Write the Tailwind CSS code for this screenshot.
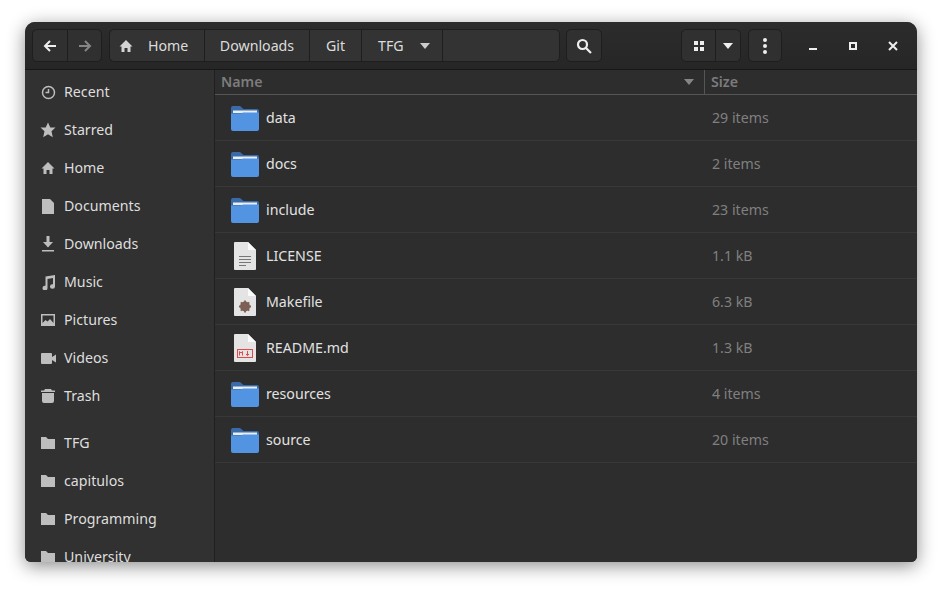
<!DOCTYPE html>
<html lang="en">

<head>
    <meta charset="UTF-8" />
    <title>TFG - Files</title>
    <script src="https://cdn.jsdelivr.net/npm/@tailwindcss/browser@4"></script>
</head>

<body class="bg-white h-[590px] w-[942px] overflow-hidden font-['Noto_Sans',sans-serif] text-[14.2px]">
    <svg class="hidden">
        <symbol id="folder-blue" viewBox="0 0 28 26">
            <path d="M0 3a2 2 0 0 1 2-2h7l3.500 3H26a2 2 0 0 1 2 2v4H0z" fill="#3a6ba8" />
            <rect x="2" y="5.500" width="24" height="2.500" fill="#e8eef6" />
            <path d="M0 8.500h10l2-1h16V24a2 2 0 0 1-2 2H2a2 2 0 0 1-2-2z" fill="#5294e2" />
        </symbol>
        <symbol id="folder" viewBox="0 0 14 14">
            <path d="M0 1h5l2 2h7v10H0z" fill="#bebebe" />
        </symbol>
        <symbol id="page" viewBox="0 0 22 28">
            <path d="M1 0h13l8 8v19a1 1 0 0 1-1 1H1a1 1 0 0 1-1-1V1a1 1 0 0 1 1-1z" fill="#e4e4e4" />
            <path d="M14 0l8 8h-8z" fill="#fafafa" />
        </symbol>
        <symbol id="caret" viewBox="0 0 10 6">
            <path d="M0 0h10L5 6z" fill="currentColor" />
        </symbol>
    </svg>

    <div class="ml-[25px] mt-[22px] w-[892px] h-[540px] rounded-t-[10px] rounded-b-[6px] overflow-hidden flex flex-col bg-[#2d2d2d] shadow-[0_4px_18px_rgba(0,0,0,0.45)]">
        <!-- header -->
        <header class="h-[48px] shrink-0 flex items-center pl-[7px] border-b border-[#171717] bg-gradient-to-b from-[#2c2c2c] to-[#262626] text-[#dcdcdc]">
            <div class="flex h-[33px] w-[70px] rounded-[5px] border border-[#1e1e1e] bg-[#303030]">
                <div class="w-[35px] flex items-center justify-center border-r border-[#1e1e1e]">
                    <svg width="14" height="14" viewBox="0 0 14 14" fill="none" stroke="#eeeeee" stroke-width="2"><path d="M13 7H2M7 2L2 7l5 5" /></svg>
                </div>
                <div class="flex-1 flex items-center justify-center">
                    <svg width="14" height="14" viewBox="0 0 14 14" fill="none" stroke="#858585" stroke-width="2"><path d="M1 7h11M7 2l5 5-5 5" /></svg>
                </div>
            </div>

            <div class="ml-[7px] flex h-[33px] w-[451px] rounded-[5px] border border-[#1e1e1e] bg-[#333333]">
                <div class="w-[95px] flex items-center border-r border-[#1e1e1e] pl-[9px] gap-[15px]">
                    <svg width="14" height="14" viewBox="0 0 14 14"><path d="M7 1L0.500 7.500H2.500V13H5.500V9H8.500V13H11.500V7.500H13.500z" fill="#d4d4d4" /></svg>
                    <span>Home</span>
                </div>
                <div class="w-[105px] flex items-center justify-center border-r border-[#1e1e1e]">Downloads</div>
                <div class="w-[52px] flex items-center justify-center border-r border-[#1e1e1e]">Git</div>
                <div class="w-[81px] flex items-center border-r border-[#1e1e1e] pl-[16px]">
                    <span>TFG</span>
                    <svg class="ml-[16px] text-[#cccccc]" width="10" height="6"><use href="#caret" /></svg>
                </div>
            </div>

            <div class="ml-[6px] w-[36px] h-[33px] rounded-[5px] border border-[#1e1e1e] bg-[#303030] flex items-center justify-center">
                <svg width="16" height="16" viewBox="0 0 16 16" fill="none" stroke="#eeeeee" stroke-width="2.200"><circle cx="6.500" cy="6.500" r="4.500" /><path d="M10 10l5 5" /></svg>
            </div>

            <div class="ml-[79px] flex h-[33px] w-[60px] rounded-[5px] border border-[#1e1e1e] bg-[#303030]">
                <div class="w-[34px] flex items-center justify-center border-r border-[#1e1e1e]">
                    <div class="grid grid-cols-2 gap-[2px]">
                        <div class="w-[4px] h-[4px] bg-[#eeeeee]"></div>
                        <div class="w-[4px] h-[4px] bg-[#eeeeee]"></div>
                        <div class="w-[4px] h-[4px] bg-[#eeeeee]"></div>
                        <div class="w-[4px] h-[4px] bg-[#eeeeee]"></div>
                    </div>
                </div>
                <div class="flex-1 flex items-center justify-center text-[#eeeeee]">
                    <svg width="10" height="6"><use href="#caret" /></svg>
                </div>
            </div>

            <div class="ml-[7px] w-[34px] h-[33px] rounded-[5px] border border-[#1e1e1e] bg-[#303030] flex flex-col items-center justify-center gap-[2px]">
                <div class="w-[4px] h-[4px] rounded-full bg-[#eeeeee]"></div>
                <div class="w-[4px] h-[4px] rounded-full bg-[#eeeeee]"></div>
                <div class="w-[4px] h-[4px] rounded-full bg-[#eeeeee]"></div>
            </div>

            <!-- window buttons -->
            <div class="ml-[11px] flex">
                <div class="w-[40px] h-[33px] flex items-center justify-center">
                    <div class="w-[8px] h-[2px] mt-[6px] bg-[#eeeeee]"></div>
                </div>
                <div class="w-[40px] h-[33px] flex items-center justify-center">
                    <div class="w-[8px] h-[8px] border-2 border-[#eeeeee]"></div>
                </div>
                <div class="w-[40px] h-[33px] flex items-center justify-center">
                    <svg width="10" height="10" viewBox="0 0 10 10" stroke="#eeeeee" stroke-width="2"><path d="M1 1l8 8M9 1l-8 8" /></svg>
                </div>
            </div>
        </header>

        <div class="flex flex-1 min-h-0">
            <!-- sidebar -->
            <aside class="w-[190px] shrink-0 bg-[#313131] border-r border-[#1f1f1f] pt-[3px] overflow-hidden text-[#dedede]">
                <div class="h-[38px] flex items-center pl-[15px] gap-[8px]">
                    <div class="w-[16px] flex justify-center"><svg width="15" height="15" viewBox="0 0 15 15" fill="none" stroke="#bebebe" stroke-width="1.500"><circle cx="7.500" cy="7.500" r="6" /><path d="M7.500 4v3.500H4.500" /></svg></div>
                    <span>Recent</span>
                </div>
                <div class="h-[38px] flex items-center pl-[15px] gap-[8px]">
                    <div class="w-[16px] flex justify-center"><svg width="16" height="16" viewBox="0 0 16 16"><path d="M8 0.500l2.300 5h5.200l-4 3.700 1.300 6L8 12.200l-4.800 3 1.300-6-4-3.700h5.200z" fill="#bebebe" /></svg></div>
                    <span>Starred</span>
                </div>
                <div class="h-[38px] flex items-center pl-[15px] gap-[8px]">
                    <div class="w-[16px] flex justify-center"><svg width="14" height="14" viewBox="0 0 14 14"><path d="M7 1L0.500 7.500H2.500V13H5.500V9H8.500V13H11.500V7.500H13.500z" fill="#bebebe" /></svg></div>
                    <span>Home</span>
                </div>
                <div class="h-[38px] flex items-center pl-[15px] gap-[8px]">
                    <div class="w-[16px] flex justify-center"><svg width="12" height="15" viewBox="0 0 12 15"><path d="M0 0h8l4 4v11H0z" fill="#bebebe" /></svg></div>
                    <span>Documents</span>
                </div>
                <div class="h-[38px] flex items-center pl-[15px] gap-[8px]">
                    <div class="w-[16px] flex justify-center"><svg width="14" height="16" viewBox="0 0 14 16"><path d="M5.500 0h3v6H12L7 11.500 2 6h3.500zM1 14h12v1.500H1z" fill="#bebebe" /></svg></div>
                    <span>Downloads</span>
                </div>
                <div class="h-[38px] flex items-center pl-[15px] gap-[8px]">
                    <div class="w-[16px] flex justify-center"><svg width="15" height="15" viewBox="0 0 15 15"><path d="M4.500 1.500L14 0v11.500a2.500 2.300 0 1 1-2-2.200V3L6.500 4v9a2.500 2.300 0 1 1-2-2.200z" fill="#bebebe" /></svg></div>
                    <span>Music</span>
                </div>
                <div class="h-[38px] flex items-center pl-[15px] gap-[8px]">
                    <div class="w-[16px] flex justify-center"><svg width="14" height="12" viewBox="0 0 14 12"><path fill-rule="evenodd" d="M0 0h14v12H0zM1.500 1.500V9l3-3 2 1.500L9 5l3.500 4V1.500z" fill="#bebebe" /></svg></div>
                    <span>Pictures</span>
                </div>
                <div class="h-[38px] flex items-center pl-[15px] gap-[8px]">
                    <div class="w-[16px] flex justify-center"><svg width="15" height="11" viewBox="0 0 15 11"><path d="M1 0h9a1 1 0 0 1 1 1v3l4-2.500v8L11 7v3a1 1 0 0 1-1 1H1a1 1 0 0 1-1-1V1a1 1 0 0 1 1-1z" fill="#bebebe" /></svg></div>
                    <span>Videos</span>
                </div>
                <div class="h-[38px] flex items-center pl-[15px] gap-[8px]">
                    <div class="w-[16px] flex justify-center"><svg width="14" height="14" viewBox="0 0 14 14"><path d="M4 0h6l1 1.500h3V3H0V1.500h3zM1 4h12v8a2 2 0 0 1-2 2H3a2 2 0 0 1-2-2z" fill="#bebebe" /></svg></div>
                    <span>Trash</span>
                </div>
                <div class="h-[9px]"></div>
                <div class="h-[38px] flex items-center pl-[15px] gap-[8px]">
                    <div class="w-[16px] flex justify-center"><svg width="14" height="14"><use href="#folder" /></svg></div>
                    <span>TFG</span>
                </div>
                <div class="h-[38px] flex items-center pl-[15px] gap-[8px]">
                    <div class="w-[16px] flex justify-center"><svg width="14" height="14"><use href="#folder" /></svg></div>
                    <span>capitulos</span>
                </div>
                <div class="h-[38px] flex items-center pl-[15px] gap-[8px]">
                    <div class="w-[16px] flex justify-center"><svg width="14" height="14"><use href="#folder" /></svg></div>
                    <span>Programming</span>
                </div>
                <div class="h-[38px] flex items-center pl-[15px] gap-[8px]">
                    <div class="w-[16px] flex justify-center"><svg width="14" height="14"><use href="#folder" /></svg></div>
                    <span>University</span>
                </div>
            </aside>

            <!-- file list -->
            <main class="flex-1 min-w-0 bg-[#2d2d2d]">
                <div class="h-[25px] flex border-b border-[#555555] font-semibold text-[#7c7c7c]">
                    <div class="w-[490px] flex items-center justify-between pl-[6px] pr-[10px] border-r border-[#555555]">
                        <span>Name</span>
                        <svg class="text-[#858585]" width="10" height="6"><use href="#caret" /></svg>
                    </div>
                    <div class="flex items-center pl-[6px]">Size</div>
                </div>

                <div id="rows"></div>
            </main>
        </div>
    </div>

    <script>
        // file rows
        const folder = `<svg width="28" height="26"><use href="#folder-blue" /></svg>`;
        const lines = `<path d="M5 14.500h12M5 17.500h12M5 20.500h12M5 23.500h7" stroke="#777777" stroke-width="1" />`;
        const gear = `<circle cx="11" cy="18.500" r="3.600" fill="none" stroke="#7d5f55" stroke-width="2.800" /><path d="M11 12.500v12M5 18.500h12M6.800 14.300l8.400 8.400M15.200 14.300l-8.400 8.400" stroke="#7d5f55" stroke-width="1.800" />`;
        const md = `<rect x="3.500" y="15.500" width="15" height="8" fill="none" stroke="#e04a4a" stroke-width="1" /><path d="M5.500 21.500v-4l1.500 1.500 1.500-1.500v4M13.500 17v4.500M12 20l1.500 1.500L15 20" fill="none" stroke="#e04a4a" stroke-width="1" />`;
        const page = inner => `<svg width="22" height="28" viewBox="0 0 22 28"><use href="#page" />${inner}</svg>`;
        const files = [
            ["data", "29 items", folder],
            ["docs", "2 items", folder],
            ["include", "23 items", folder],
            ["LICENSE", "1.1 kB", page(lines)],
            ["Makefile", "6.3 kB", page(gear)],
            ["README.md", "1.3 kB", page(md)],
            ["resources", "4 items", folder],
            ["source", "20 items", folder],
        ];
        document.getElementById("rows").innerHTML = files.map(f => `
            <div class="h-[46px] flex items-center border-b border-[#383838]">
                <div class="w-[490px] flex items-center">
                    <div class="w-[51px] flex justify-center pl-[8px]">${f[2]}</div>
                    <span class="text-[#e2e2e2]">${f[0]}</span>
                </div>
                <span class="pl-[7px] text-[#808080]">${f[1]}</span>
            </div>`).join("");
    </script>
</body>

</html>
